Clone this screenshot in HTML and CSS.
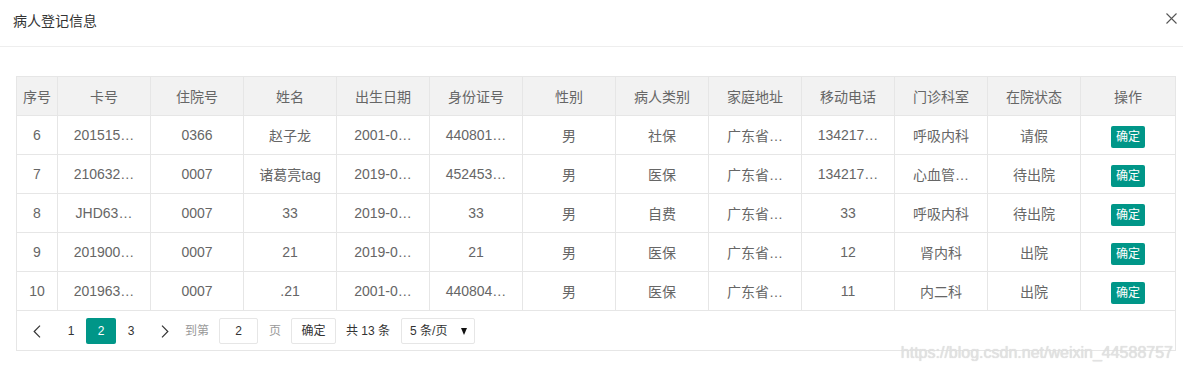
FILE: index.html
```html
<!DOCTYPE html>
<html lang="zh-CN">
<head>
<meta charset="utf-8">
<title>病人登记信息</title>
<link rel="stylesheet" href="styles.css">
</head>
<body>
<div class="dialog">
  <div class="dlg-head">
    <span class="dlg-title">病人登记信息</span>
    <span class="dlg-close" aria-label="关闭">
      <svg width="11" height="11" viewBox="0 0 11 11"><path d="M0.5 0.5 L10.5 10.5 M10.5 0.5 L0.5 10.5" stroke="#555" stroke-width="1.1" fill="none"/></svg>
    </span>
  </div>
  <div class="dlg-body">
    <div class="grid">
      <table class="data">
        <colgroup>
          <col class="c-idx"><col class="c-n"><col class="c-n"><col class="c-n"><col class="c-n"><col class="c-n"><col class="c-n"><col class="c-n"><col class="c-n"><col class="c-n"><col class="c-n"><col class="c-n"><col class="c-op">
        </colgroup>
        <thead>
          <tr>
            <th class="idx">序号</th><th>卡号</th><th>住院号</th><th>姓名</th><th>出生日期</th><th>身份证号</th><th>性别</th><th>病人类别</th><th>家庭地址</th><th>移动电话</th><th>门诊科室</th><th>在院状态</th><th>操作</th>
          </tr>
        </thead>
        <tbody>
          <tr>
            <td class="idx">6</td><td>201515…</td><td>0366</td><td>赵子龙</td><td>2001-0…</td><td>440801…</td><td>男</td><td>社保</td><td>广东省…</td><td>134217…</td><td>呼吸内科</td><td>请假</td><td><span class="btn-xs">确定</span></td>
          </tr>
          <tr>
            <td class="idx">7</td><td>210632…</td><td>0007</td><td>诸葛亮tag</td><td>2019-0…</td><td>452453…</td><td>男</td><td>医保</td><td>广东省…</td><td>134217…</td><td>心血管…</td><td>待出院</td><td><span class="btn-xs">确定</span></td>
          </tr>
          <tr>
            <td class="idx">8</td><td>JHD63…</td><td>0007</td><td>33</td><td>2019-0…</td><td>33</td><td>男</td><td>自费</td><td>广东省…</td><td>33</td><td>呼吸内科</td><td>待出院</td><td><span class="btn-xs">确定</span></td>
          </tr>
          <tr>
            <td class="idx">9</td><td>201900…</td><td>0007</td><td>21</td><td>2019-0…</td><td>21</td><td>男</td><td>医保</td><td>广东省…</td><td>12</td><td>肾内科</td><td>出院</td><td><span class="btn-xs">确定</span></td>
          </tr>
          <tr>
            <td class="idx">10</td><td>201963…</td><td>0007</td><td>.21</td><td>2001-0…</td><td>440804…</td><td>男</td><td>医保</td><td>广东省…</td><td>11</td><td>内二科</td><td>出院</td><td><span class="btn-xs">确定</span></td>
          </tr>
        </tbody>
      </table>
      <div class="pager">
        <span class="pg-arrow pg-prev"><svg width="8" height="13" viewBox="0 0 8 13"><path d="M7 0.7 L1.2 6.5 L7 12.3" stroke="#333" stroke-width="1.2" fill="none"/></svg></span>
        <span class="pg-num">1</span>
        <span class="pg-num pg-cur">2</span>
        <span class="pg-num">3</span>
        <span class="pg-arrow pg-next"><svg width="8" height="13" viewBox="0 0 8 13"><path d="M1 0.7 L6.8 6.5 L1 12.3" stroke="#333" stroke-width="1.2" fill="none"/></svg></span>
        <span class="pg-skip">到第</span>
        <span class="pg-input">2</span>
        <span class="pg-skip pg-page">页</span>
        <span class="pg-btn">确定</span>
        <span class="pg-count">共 13 条</span>
        <span class="pg-limit"><span>5 条/页</span><span class="pg-caret"></span></span>
      </div>
    </div>
  </div>
  <div class="watermark">https://blog.csdn.net/weixin_44588757</div>
</div>
</body>
</html>
```

FILE: styles.css
```css
* { box-sizing: border-box; }
html, body {
  margin: 0;
  padding: 0;
  background: #fff;
}
body {
  font-family: "Liberation Sans", "Noto Sans CJK SC", sans-serif;
  color: #666;
  font-size: 14px;
}
.dialog {
  position: relative;
  width: 1183px;
  height: 373px;
  overflow: hidden;
}
.dlg-head {
  height: 47px;
  border-bottom: 1px solid #eee;
  display: flex;
  justify-content: space-between;
  align-items: flex-start;
  padding: 0 6px 0 13px;
}
.dlg-title {
  line-height: 42px;
  font-size: 14px;
  color: #333;
}
.dlg-close {
  margin-top: 13px;
  width: 11px;
  height: 11px;
  display: block;
}
.dlg-close svg { display: block; }
.dlg-body {
  padding: 29px 0 0 16px;
}
.grid {
  width: 1160px;
}
.data {
  width: 1160px;
  table-layout: fixed;
  border-collapse: collapse;
}
.c-idx { width: 41px; }
.c-n { width: 93px; }
.c-op { width: 95px; }
.data th, .data td {
  border: 1px solid #e6e6e6;
  height: 39px;
  padding: 0 15px;
  text-align: center;
  font-weight: normal;
  color: #666;
  font-size: 14px;
  white-space: nowrap;
  overflow: hidden;
  text-overflow: ellipsis;
}
.data th { background: #f2f2f2; }
.data th.idx, .data td.idx { padding: 0; }
.btn-xs {
  display: inline-block;
  height: 22px;
  line-height: 22px;
  padding: 0 5px;
  font-size: 12px;
  color: #fff;
  background: #009688;
  border-radius: 2px;
  position: relative;
  top: 2px;
}
.pager {
  height: 40px;
  border: 1px solid #e6e6e6;
  border-top: none;
  display: flex;
  align-items: flex-start;
  padding: 7px 0 0 3px;
  font-size: 12px;
  color: #333;
}
.pager > span {
  height: 26px;
  line-height: 26px;
  flex: none;
}
.pg-arrow {
  width: 34px;
  display: flex;
  align-items: center;
  justify-content: center;
}
.pg-arrow svg { display: block; }
.pg-prev { margin-right: 2px; }
.pg-next { margin-left: 2px; }
.pg-num {
  width: 30px;
  text-align: center;
  color: #333;
}
.pg-cur {
  background: #009688;
  color: #fff;
  border-radius: 2px;
}
.pg-skip {
  color: #999;
  margin-left: 3px;
}
.pg-input {
  width: 39px;
  margin-left: 10px;
  border: 1px solid #e6e6e6;
  border-radius: 2px;
  text-align: center;
  color: #333;
  line-height: 24px !important;
}
.pg-page { margin-left: 11px; }
.pg-btn {
  width: 45px;
  margin-left: 10px;
  border: 1px solid #e6e6e6;
  border-radius: 2px;
  text-align: center;
  color: #333;
  line-height: 24px !important;
}
.pg-count {
  margin-left: 10px;
  color: #333;
}
.pg-limit {
  width: 74px;
  margin-left: 11px;
  border: 1px solid #e6e6e6;
  border-radius: 2px;
  display: flex;
  align-items: center;
  justify-content: space-between;
  padding: 0 7px 0 8px;
  color: #333;
}
.pg-caret {
  width: 0;
  height: 0;
  border-left: 3.5px solid transparent;
  border-right: 3.5px solid transparent;
  border-top: 7px solid #111;
}
.watermark {
  position: absolute;
  right: 10px;
  top: 343px;
  font-family: "Liberation Sans", sans-serif;
  font-size: 16px;
  line-height: 20px;
  color: #e2e2e2;
  text-shadow: 0 0 1px #d0d0d0;
  white-space: nowrap;
}
```
